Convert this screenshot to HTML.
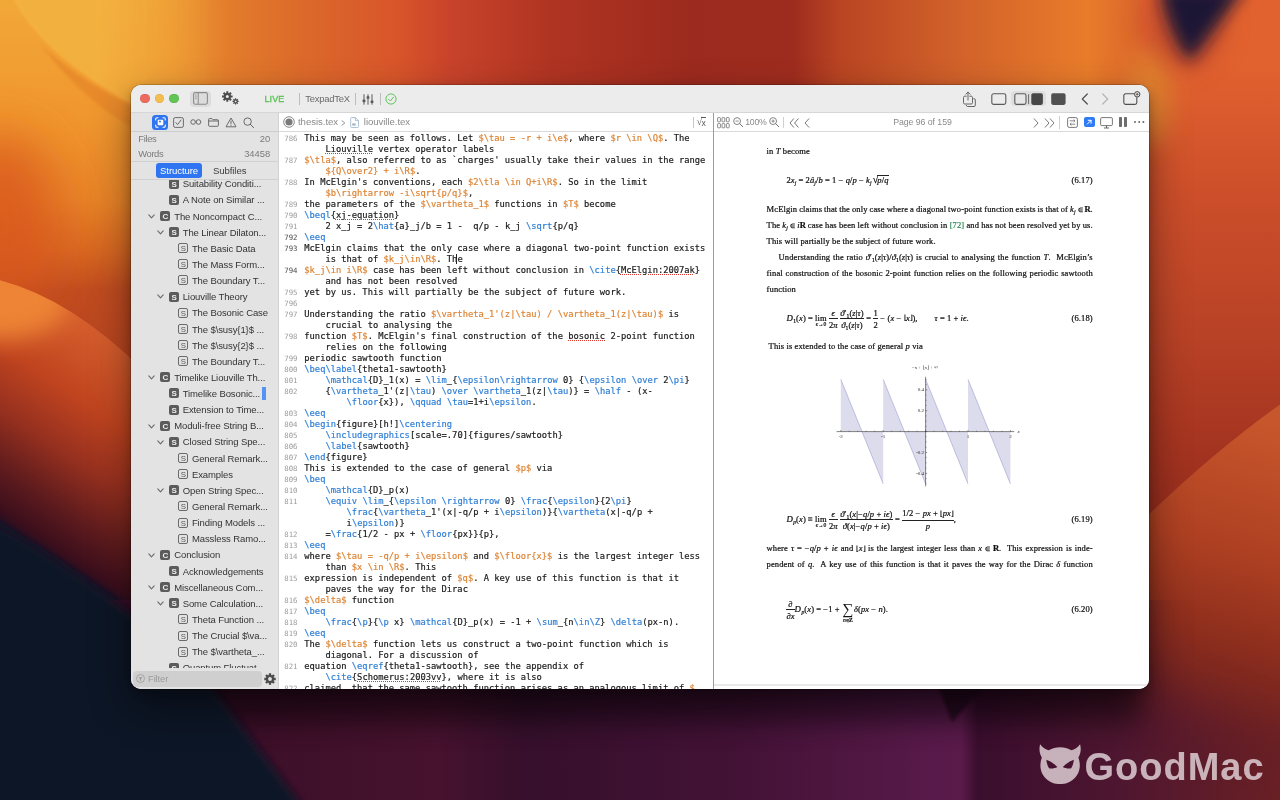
<!DOCTYPE html>
<html lang="en"><head><meta charset="utf-8"><title>Texpad – liouville.tex</title>
<style>
*{box-sizing:border-box;margin:0;padding:0}
html,body{width:1280px;height:800px;overflow:hidden;background:#c4431f}
body{position:relative;font-family:"Liberation Sans",sans-serif;-webkit-font-smoothing:antialiased}
.bg{position:absolute;left:0;top:0}
#win{will-change:transform;position:absolute;left:131px;top:85px;width:1018px;height:604px;border-radius:10px;overflow:hidden;background:#fff;box-shadow:0 0 0 0.5px rgba(0,0,0,.35),0 18px 40px rgba(0,0,0,.45),0 4px 12px rgba(0,0,0,.25)}
#win>div,#win>svg{position:absolute}
#tb{left:0;top:0;width:1018px;height:27.5px;background:#ececec;border-bottom:0.5px solid #d6d6d6}
#side{left:0;top:27.5px;width:147.5px;height:576.5px;background:#e3e3e3;border-right:1px solid #d2d2d2}
#ed{left:148px;top:27.5px;width:434.5px;height:576.5px;background:#fff;overflow:hidden}
#pdf{left:582px;top:27.5px;width:436px;height:576.5px;background:#fff;border-left:1px solid #9c9c9c}
.hl{position:absolute;height:1px;background:#d4d4d4}
.vl{position:absolute;width:1px;background:#c9c9c9}
.t{position:absolute;white-space:nowrap;line-height:14px;height:14px}
/* code */
.cl,.ln{position:absolute;white-space:pre;font-family:"DejaVu Sans Mono","Liberation Mono",monospace;line-height:11px;height:11px}
.cl{font-size:8.78px;color:#1a1a1a;-webkit-text-stroke:0.18px}
.ln{left:148px;width:18.3px;text-align:right;font-size:7.35px;color:#9a9a9a;padding-top:0.1px;letter-spacing:-0.1px}
.ln.cur{color:#4a4a4a}
.o{color:#dd8333}.b{color:#2f7fd6}
.sq{text-decoration:underline dotted #e0352b;text-decoration-thickness:1px;text-underline-offset:1px}
/* tree */
.ti{position:absolute;width:10px;height:10px;border-radius:2px;font-size:8px;line-height:11.6px;text-align:center;font-weight:bold;overflow:hidden}
.ti.f{background:#5b5b5b;color:#efefef}
.ti.o{border:1px solid #6a6a6a;color:#555;line-height:9.4px;font-weight:normal;font-size:7.8px}
.tl{position:absolute;white-space:nowrap;font-size:9.5px;line-height:14px;height:14px;color:#333;letter-spacing:-0.1px}
.chev{position:absolute}
/* pdf */
.pl,.eq{position:absolute;font-family:"Liberation Serif",serif;font-size:8.5px;letter-spacing:0.12px;line-height:16px;height:16px;white-space:nowrap;color:#111;-webkit-text-stroke:0.22px}
.pl.j{white-space:normal;text-align:justify;text-align-last:justify;overflow:hidden}
.pl sub,.eq sub{font-size:5.6px;vertical-align:-1.6px;line-height:0}
.g{color:#2e8a57}
.bb{font-weight:bold;letter-spacing:-0.2px}
.eq{white-space:nowrap;overflow:visible;word-spacing:-0.1px}
.fl{font-size:7.4px;letter-spacing:-0.5px;position:relative;top:-0.3px}
.eq i,.pl i{font-style:italic}
.fr{display:inline-block;vertical-align:middle;text-align:center;margin:-5px 0;position:relative;top:0.3px}
.fr .nu{display:block;line-height:10px;border-bottom:0.55px solid #222;padding:0 0.3px 0.6px}
.fr .de{display:block;line-height:10px;padding-top:0.6px}
.lim{display:inline-block;position:relative;margin:0;text-align:center}
.lim .ls{position:absolute;left:50%;transform:translateX(-50%);top:11.4px;font-size:5.6px;line-height:6px;letter-spacing:0;white-space:nowrap}
.sum{font-size:15.5px;line-height:16px;position:relative;top:0.8px;display:inline-block;height:16px;vertical-align:top;letter-spacing:0;margin:0 0.5px;-webkit-text-stroke:0}
.su .ls{top:16.2px}
.sqr{font-size:10px;margin-left:1px;position:relative;top:0.6px;letter-spacing:0;line-height:0}
.ov{border-top:0.55px solid #222;display:inline-block;line-height:9.4px;margin-left:-0.9px;position:relative;top:0.6px}
.in{font-size:6.4px;letter-spacing:0;position:relative;top:-0.4px}
.sp{display:inline-block}
.cd{font-size:8.8px;margin-right:0.3px}
.pt{font-family:"Liberation Serif",serif;font-size:5px;fill:#2a2a2a}
</style></head><body>

<svg class="bg" width="1280" height="800" viewBox="0 0 1280 800">
<defs>
<filter id="b40" x="-50%" y="-50%" width="200%" height="200%"><feGaussianBlur stdDeviation="40"/></filter>
<filter id="b25" x="-50%" y="-50%" width="200%" height="200%"><feGaussianBlur stdDeviation="25"/></filter>
<filter id="b12" x="-50%" y="-50%" width="200%" height="200%"><feGaussianBlur stdDeviation="12"/></filter>
<filter id="b9" x="-50%" y="-50%" width="200%" height="200%"><feGaussianBlur stdDeviation="8"/></filter>
<filter id="b6" x="-50%" y="-50%" width="200%" height="200%"><feGaussianBlur stdDeviation="6"/></filter>
<filter id="b4" x="-50%" y="-50%" width="200%" height="200%"><feGaussianBlur stdDeviation="4"/></filter>
<filter id="b2" x="-50%" y="-50%" width="200%" height="200%"><feGaussianBlur stdDeviation="1.5"/></filter>
<linearGradient id="top" gradientUnits="userSpaceOnUse" x1="0" y1="0" x2="1280" y2="0">
<stop offset="0" stop-color="#f2aa3a"/><stop offset="0.078" stop-color="#f2a83a"/><stop offset="0.117" stop-color="#ee9a34"/><stop offset="0.18" stop-color="#e27c2c"/><stop offset="0.234" stop-color="#dc6a2a"/><stop offset="0.31" stop-color="#d8552a"/><stop offset="0.352" stop-color="#c8432a"/><stop offset="0.43" stop-color="#b03422"/><stop offset="0.54" stop-color="#9c2a1e"/><stop offset="0.62" stop-color="#9e2c1e"/><stop offset="0.655" stop-color="#b84422"/><stop offset="0.742" stop-color="#d0602a"/><stop offset="0.85" stop-color="#e87c2a"/><stop offset="0.9" stop-color="#d8602c"/><stop offset="1" stop-color="#e0623a"/>
</linearGradient>
<linearGradient id="lft" gradientUnits="userSpaceOnUse" x1="0" y1="0" x2="0" y2="400">
<stop offset="0" stop-color="#f2a838"/><stop offset="0.3" stop-color="#f0962e"/><stop offset="0.5" stop-color="#e88428"/><stop offset="0.625" stop-color="#d86822"/><stop offset="0.725" stop-color="#c04c20"/><stop offset="0.9" stop-color="#b84420"/>
</linearGradient>
<linearGradient id="lf2" gradientUnits="userSpaceOnUse" x1="90" y1="330" x2="-27.5" y2="505">
<stop offset="0" stop-color="#d45c2c"/><stop offset="0.3" stop-color="#c0441f"/><stop offset="0.55" stop-color="#96301f"/><stop offset="0.78" stop-color="#5e1b1d"/><stop offset="0.95" stop-color="#3a0e1c"/><stop offset="1" stop-color="#1e1226"/>
</linearGradient>
<linearGradient id="rgt" gradientUnits="userSpaceOnUse" x1="0" y1="60" x2="0" y2="520">
<stop offset="0" stop-color="#e2622f"/><stop offset="0.3" stop-color="#cc4e2a"/><stop offset="0.6" stop-color="#b84226"/><stop offset="0.8" stop-color="#a83621"/><stop offset="1" stop-color="#962c1d"/>
</linearGradient>
<linearGradient id="rg2" gradientUnits="userSpaceOnUse" x1="1260" y1="420" x2="1160" y2="770">
<stop offset="0" stop-color="#c8562c"/><stop offset="0.36" stop-color="#ae4022"/><stop offset="0.6" stop-color="#8e2e1d"/><stop offset="0.8" stop-color="#702222"/><stop offset="1" stop-color="#581a2a"/>
</linearGradient>
<linearGradient id="purp" gradientUnits="userSpaceOnUse" x1="200" y1="0" x2="1280" y2="0">
<stop offset="0" stop-color="#3a0f28"/><stop offset="0.22" stop-color="#46122e"/><stop offset="0.3" stop-color="#36102c"/><stop offset="0.5" stop-color="#431236"/><stop offset="0.68" stop-color="#581a4a"/><stop offset="0.705" stop-color="#5a1a4a"/><stop offset="0.72" stop-color="#3a0e2e"/><stop offset="0.85" stop-color="#4e1630"/><stop offset="1" stop-color="#6a2024"/>
</linearGradient>
<linearGradient id="shade" gradientUnits="userSpaceOnUse" x1="0" y1="689" x2="0" y2="800">
<stop offset="0" stop-color="#000" stop-opacity="0.35"/><stop offset="0.4" stop-color="#000" stop-opacity="0.08"/><stop offset="1" stop-color="#000" stop-opacity="0"/>
</linearGradient>
<linearGradient id="yl" gradientUnits="userSpaceOnUse" x1="0" y1="0" x2="240" y2="0">
<stop offset="0" stop-color="#f3b341"/><stop offset="0.4" stop-color="#f3b341"/><stop offset="0.95" stop-color="#f0a038" stop-opacity="0"/>
</linearGradient>
<radialGradient id="rr" gradientUnits="userSpaceOnUse" cx="1310" cy="560" r="330">
<stop offset="0" stop-color="#a03a1e"/><stop offset="0.28" stop-color="#8e2e1c"/><stop offset="0.42" stop-color="#7a281e" stop-opacity="0.95"/><stop offset="0.62" stop-color="#66202a" stop-opacity="0.75"/><stop offset="1" stop-color="#4a1434" stop-opacity="0"/>
</radialGradient>
<mask id="pm" maskUnits="userSpaceOnUse" x="0" y="560" width="1280" height="240"><rect x="0" y="560" width="1280" height="240" fill="#fff"/><path d="M1135,500 L1400,500 L1400,800 L1135,688 Z" fill="#000" filter="url(#b25)"/></mask>
<linearGradient id="lmg" gradientUnits="userSpaceOnUse" x1="90" y1="0" x2="215" y2="0"><stop offset="0" stop-color="#fff"/><stop offset="1" stop-color="#000"/></linearGradient><mask id="lm" maskUnits="userSpaceOnUse" x="0" y="-5" width="220" height="90"><rect x="0" y="-5" width="220" height="90" fill="url(#lmg)"/></mask>
<clipPath id="cB"><path d="M-5,279 Q70,297 145,372 L145,640 L-5,640 Z"/></clipPath>
</defs>
<rect width="1280" height="800" fill="#b8401f"/>
<!-- top strip -->
<rect x="0" y="0" width="1280" height="120" fill="url(#top)"/>
<!-- left strip -->
<rect x="0" y="84" width="200" height="336" fill="url(#lft)"/><rect x="0" y="-5" width="220" height="90" fill="url(#lft)" mask="url(#lm)"/>
<path d="M14,-2 Q48,62 150,112 L240,112 L240,-2 Z" fill="url(#yl)" filter="url(#b2)" opacity="0.85"/>
<rect x="100" y="0" width="200" height="120" fill="url(#top)" opacity="0.0"/>
<ellipse cx="0" cy="225" rx="58" ry="90" fill="#d9561d" filter="url(#b25)" opacity="0.8"/>
<path d="M40,44 Q84,86 150,113 L150,136 Q92,112 40,44 Z" fill="#e27e26" opacity="0.55" filter="url(#b2)"/>
<path d="M14,-2 Q48,62 150,112" fill="none" stroke="#f9c452" stroke-width="1.2" opacity="0.55" filter="url(#b2)"/>
<path d="M-5,279 Q70,297 145,372 L145,640 L-5,640 Z" fill="url(#lf2)"/>
<g clip-path="url(#cB)"><ellipse cx="0" cy="300" rx="70" ry="40" fill="#ee8434" filter="url(#b12)"/></g>
<!-- right strip -->
<rect x="1140" y="-5" width="150" height="555" fill="url(#rgt)"/>
<ellipse cx="1150" cy="95" rx="22" ry="50" fill="#e0802e" filter="url(#b12)"/>
<path d="M1140,523 Q1215,450 1285,401 L1285,810 L1100,810 L1100,600 Z" fill="url(#rg2)"/>
<!-- dark wedge top right -->
<ellipse cx="1185" cy="20" rx="40" ry="50" fill="#b8442a" filter="url(#b12)" opacity="0.7"/><path d="M1160,-14 L1246,-14 L1190,62 Q1168,36 1160,-14 Z" fill="#1c1736" filter="url(#b9)"/>
<!-- bottom strip -->
<rect x="0" y="600" width="1280" height="200" fill="url(#purp)" mask="url(#pm)"/>
<path d="M985,686 L952,722 L938,686 Z" fill="#2e0a26" filter="url(#b2)"/>

<rect x="140" y="660" width="1000" height="62" fill="#000" opacity="0.33" filter="url(#b12)"/>
<!-- navy -->
<path d="M-20,514 Q70,566 131,614 L215,691 L305,810 L-20,810 Z" fill="#0b1728" filter="url(#b4)"/>
</svg>

<div id="wm" style="position:absolute;left:1038px;top:742px;width:240px;height:48px;opacity:.84">
<svg width="46" height="46" viewBox="0 0 46 46" style="position:absolute;left:0;top:0">
<path fill-rule="evenodd" fill="#e0d0d6" d="M2.1 2.2 C4.6 5.6 7.6 7.4 10.8 8.2 C14.2 6.2 18 5.2 22.1 5.2 C26.2 5.2 30 6.2 33.4 8.2 C36.6 7.4 39.6 5.6 42.1 2.2 C43.4 7.4 42.6 11.8 40.4 15.4 C41.3 17.9 41.8 20.6 41.8 23.4 C41.8 34 33 42.1 22.1 42.1 C11.2 42.1 2.4 34 2.4 23.4 C2.4 20.6 2.9 17.9 3.8 15.4 C1.6 11.8 0.8 7.4 2.1 2.2 Z M8.4 17.8 C12.6 19.4 16.4 21.8 19.4 25 C16.8 26.4 13.6 26.8 11 26.2 C9.4 23.6 8.6 20.8 8.4 17.8 Z M35.8 17.8 C31.6 19.4 27.8 21.8 24.8 25 C27.4 26.4 30.6 26.8 33.2 26.2 C34.8 23.6 35.6 20.8 35.8 17.8 Z"/>
</svg>
<div style="position:absolute;left:46.5px;top:1.9px;font-family:'Liberation Sans',sans-serif;font-weight:bold;font-size:38px;line-height:46px;color:#e0d0d6;letter-spacing:1px;white-space:nowrap">GoodMac</div>
</div>

<div id="win">
<div id="tb">
  <div style="position:absolute;left:9.4px;top:9.2px;width:9.2px;height:9.2px;border-radius:50%;background:#ec6a5e;box-shadow:inset 0 0 0 0.5px rgba(0,0,0,.12)"></div>
  <div style="position:absolute;left:23.9px;top:9.2px;width:9.2px;height:9.2px;border-radius:50%;background:#f4be4f;box-shadow:inset 0 0 0 0.5px rgba(0,0,0,.12)"></div>
  <div style="position:absolute;left:38.4px;top:9.2px;width:9.2px;height:9.2px;border-radius:50%;background:#61c454;box-shadow:inset 0 0 0 0.5px rgba(0,0,0,.12)"></div>
  <!-- sidebar toggle -->
  <div style="position:absolute;left:59px;top:5.5px;width:20.5px;height:16px;border-radius:4px;background:#dcdcdc"></div>
  <svg style="position:absolute;left:62px;top:7px" width="15" height="13" viewBox="0 0 15 13"><rect x="0.6" y="0.6" width="13.8" height="11.6" rx="1.6" fill="none" stroke="#8c8c8c" stroke-width="1.1"/><line x1="5.2" y1="0.6" x2="5.2" y2="12.2" stroke="#8c8c8c" stroke-width="1"/><line x1="2" y1="3" x2="3.7" y2="3" stroke="#8c8c8c" stroke-width="0.7"/><line x1="2" y1="4.8" x2="3.7" y2="4.8" stroke="#8c8c8c" stroke-width="0.7"/><line x1="2" y1="6.6" x2="3.7" y2="6.6" stroke="#8c8c8c" stroke-width="0.7"/></svg>
  <!-- gears -->
  <svg style="position:absolute;left:90px;top:5px" width="20" height="16" viewBox="0 0 20 16">
   <g fill="#4d4d4d"><circle cx="6.3" cy="6.5" r="3.6"/><g stroke="#4d4d4d" stroke-width="2" stroke-linecap="butt"><line x1="6.3" y1="1.2" x2="6.3" y2="11.8"/><line x1="1" y1="6.5" x2="11.6" y2="6.5"/><line x1="2.55" y1="2.75" x2="10.05" y2="10.25"/><line x1="10.05" y1="2.75" x2="2.55" y2="10.25"/></g><circle cx="6.3" cy="6.5" r="1.5" fill="#ececec"/>
   <circle cx="14.6" cy="11.4" r="2.1"/><g stroke="#4d4d4d" stroke-width="1.3"><line x1="14.6" y1="8.3" x2="14.6" y2="14.5"/><line x1="11.5" y1="11.4" x2="17.7" y2="11.4"/><line x1="12.4" y1="9.2" x2="16.8" y2="13.6"/><line x1="16.8" y1="9.2" x2="12.4" y2="13.6"/></g><circle cx="14.6" cy="11.4" r="0.9" fill="#ececec"/></g></svg>
  <div class="t" style="left:133.5px;top:6.8px;font-size:9px;color:#5cc458;letter-spacing:0.1px;-webkit-text-stroke:0.35px #5cc458">LIVE</div>
  <div class="vl" style="left:168px;top:8px;height:11.5px;background:#bdbdbd"></div>
  <div class="t" style="left:174.3px;top:6.8px;font-size:9.4px;color:#6a6a6a;letter-spacing:-0.2px">TexpadTeX</div>
  <div class="vl" style="left:224.3px;top:8px;height:11.5px;background:#bdbdbd"></div>
  <svg style="position:absolute;left:231px;top:8.5px" width="12" height="11" viewBox="0 0 12 11"><g stroke="#5a5a5a" stroke-width="1" fill="none"><line x1="2" y1="0.3" x2="2" y2="10.7"/><line x1="6" y1="0.3" x2="6" y2="10.7"/><line x1="10" y1="0.3" x2="10" y2="10.7"/></g><g fill="#5a5a5a"><rect x="0.6" y="5.6" width="2.8" height="2.6" rx="0.6"/><rect x="4.6" y="2.2" width="2.8" height="2.6" rx="0.6"/><rect x="8.6" y="6.4" width="2.8" height="2.6" rx="0.6"/></g></svg>
  <div class="vl" style="left:249.3px;top:8px;height:11.5px;background:#bdbdbd"></div>
  <svg style="position:absolute;left:254.2px;top:7.7px" width="12" height="12" viewBox="0 0 12 12"><circle cx="6" cy="6" r="5.1" fill="none" stroke="#5fc55b" stroke-width="1"/><path d="M3.6 6.3 L5.3 8 L8.5 4.1" fill="none" stroke="#5fc55b" stroke-width="1" stroke-linecap="round" stroke-linejoin="round"/></svg>
  <!-- right icons -->
  <svg style="position:absolute;left:831px;top:5.5px" width="15" height="17" viewBox="0 0 15 17"><g fill="none" stroke="#666" stroke-width="1" stroke-linejoin="round" stroke-linecap="round"><path d="M4.3 5.2 H2.8 a1.3 1.3 0 0 0 -1.3 1.3 V11.7 a1.3 1.3 0 0 0 1.3 1.3 H9.2 a1.3 1.3 0 0 0 1.3 -1.3 V6.5 a1.3 1.3 0 0 0 -1.3 -1.3 H7.7"/><path d="M6 9 V1.2 M3.9 3.2 L6 1.1 L8.1 3.2"/><path d="M11.8 7.6 a1.3 1.3 0 0 1 1.5 1.3 V14.2 a1.3 1.3 0 0 1 -1.3 1.3 H5.6 a1.3 1.3 0 0 1 -1.3 -1.2"/></g></svg>
  <svg style="position:absolute;left:859.5px;top:7.5px" width="16" height="12.4" viewBox="0 0 16 12.4"><rect x="0.8" y="0.8" width="14" height="10.6" rx="1.8" fill="none" stroke="#5a5a5a" stroke-width="1.1"/></svg>
  <div style="position:absolute;left:879.8px;top:5.7px;width:35px;height:15.5px;border-radius:4px;background:#dedede"></div>
  <svg style="position:absolute;left:882.5px;top:7.5px" width="30" height="12.4" viewBox="0 0 30 12.4"><rect x="0.8" y="0.8" width="11.2" height="10.6" rx="1.8" fill="#e6e6e6" stroke="#5a5a5a" stroke-width="1.1"/><rect x="14.1" y="1.2" width="1" height="10" fill="#6a6a6a"/><rect x="17.3" y="0.3" width="11.6" height="11.6" rx="1.8" fill="#474747"/></svg>
  <svg style="position:absolute;left:919.7px;top:7.5px" width="15" height="12.4" viewBox="0 0 15 12.4"><rect x="0.2" y="0.3" width="14.4" height="11.6" rx="1.8" fill="#505050"/></svg>
  <svg style="position:absolute;left:949.5px;top:7.5px" width="8" height="12" viewBox="0 0 8 12"><path d="M6.3 1 L1.3 6 L6.3 11" fill="none" stroke="#505050" stroke-width="1.2" stroke-linecap="round" stroke-linejoin="round"/></svg>
  <svg style="position:absolute;left:969.5px;top:7.5px" width="8" height="12" viewBox="0 0 8 12"><path d="M1.7 1 L6.7 6 L1.7 11" fill="none" stroke="#b4b4b4" stroke-width="1.2" stroke-linecap="round" stroke-linejoin="round"/></svg>
  <svg style="position:absolute;left:992px;top:5.5px" width="18" height="15" viewBox="0 0 18 15"><path d="M11.3 2.8 H2.6 a1.8 1.8 0 0 0 -1.8 1.8 V11.6 a1.8 1.8 0 0 0 1.8 1.8 H12 a1.8 1.8 0 0 0 1.8 -1.8 V6.3" fill="none" stroke="#505050" stroke-width="1.1"/><circle cx="14.2" cy="3.3" r="2.7" fill="#ececec" stroke="#444" stroke-width="1"/><path d="M14.2 1.9 V4.7 M12.8 3.3 H15.6" stroke="#444" stroke-width="0.8"/></svg>
</div>

<div id="side">
  <div style="position:absolute;left:21.3px;top:2px;width:16.2px;height:15px;border-radius:3.5px;background:#2f74f0"></div>
  <svg style="position:absolute;left:23.9px;top:4px" width="11" height="11" viewBox="0 0 11 11"><g fill="none" stroke="#fff" stroke-width="1.1" stroke-linecap="round"><path d="M0.7 3 V2 a1.3 1.3 0 0 1 1.3 -1.3 H3"/><path d="M8 0.7 H9 a1.3 1.3 0 0 1 1.3 1.3 V3"/><path d="M10.3 8 V9 a1.3 1.3 0 0 1 -1.3 1.3 H8"/><path d="M3 10.3 H2 a1.3 1.3 0 0 1 -1.3 -1.3 V8"/></g><rect x="2.7" y="2.7" width="5.6" height="5.6" rx="1" fill="#fff"/><rect x="3.9" y="3.7" width="2" height="1.6" fill="#2f74f0"/></svg>
  <svg style="position:absolute;left:41.7px;top:4.3px" width="11" height="11" viewBox="0 0 11 11"><rect x="0.6" y="0.6" width="9.8" height="9.8" rx="1.6" fill="none" stroke="#5f5f5f" stroke-width="0.9"/><path d="M2.9 5.6 L4.6 7.6 L8 3" fill="none" stroke="#5f5f5f" stroke-width="0.9" stroke-linecap="round" stroke-linejoin="round"/></svg>
  <svg style="position:absolute;left:59px;top:6.5px" width="12" height="6" viewBox="0 0 12 6"><circle cx="3.1" cy="3" r="2.3" fill="none" stroke="#5f5f5f" stroke-width="0.9"/><circle cx="8.5" cy="3" r="2.3" fill="none" stroke="#5f5f5f" stroke-width="0.9"/></svg>
  <svg style="position:absolute;left:76.7px;top:5.3px" width="11" height="9" viewBox="0 0 11 9"><path d="M0.6 1.5 a0.9 0.9 0 0 1 0.9 -0.9 H4 L5 1.7 H9.5 a0.9 0.9 0 0 1 0.9 0.9 V7.4 a0.9 0.9 0 0 1 -0.9 0.9 H1.5 a0.9 0.9 0 0 1 -0.9 -0.9 Z M0.6 3 H10.4" fill="none" stroke="#5f5f5f" stroke-width="0.9" stroke-linejoin="round"/></svg>
  <svg style="position:absolute;left:94.2px;top:4px" width="12" height="11" viewBox="0 0 12 11"><path d="M6 1 L11 9.8 H1 Z" fill="none" stroke="#5f5f5f" stroke-width="0.9" stroke-linejoin="round"/><path d="M6 4 V6.8" stroke="#5f5f5f" stroke-width="0.9" stroke-linecap="round"/><circle cx="6" cy="8.2" r="0.55" fill="#5f5f5f"/></svg>
  <svg style="position:absolute;left:111.8px;top:4px" width="12" height="12" viewBox="0 0 12 12"><circle cx="4.6" cy="4.6" r="3.7" fill="none" stroke="#5f5f5f" stroke-width="0.9"/><path d="M7.4 7.4 L10.6 10.6" stroke="#5f5f5f" stroke-width="1" stroke-linecap="round"/></svg>
  <div class="hl" style="left:0;top:18.7px;width:147px;background:#cdcdcd"></div>
  <div class="t" style="left:7.3px;top:19.7px;font-size:9.4px;color:#7b7b7b;letter-spacing:-0.35px">Files</div>
  <div class="t" style="right:7.3px;top:19.7px;font-size:9.4px;color:#7b7b7b">20</div>
  <div class="t" style="left:7.3px;top:34.2px;font-size:9.4px;color:#7b7b7b;letter-spacing:-0.4px">Words</div>
  <div class="t" style="right:7.3px;top:34.2px;font-size:9.4px;color:#7b7b7b">34458</div>
  <div class="hl" style="left:0;top:48px;width:147px;background:#d0d0d0"></div>
  <div style="position:absolute;left:24.9px;top:50.5px;width:46.4px;height:14.6px;border-radius:3px;background:#2f74f0"></div>
  <div class="t" style="left:24.9px;width:46.4px;text-align:center;top:51.4px;font-size:9.6px;color:#fff;letter-spacing:-0.1px">Structure</div>
  <div class="t" style="left:82px;top:51.4px;font-size:9.6px;color:#3c3c3c;letter-spacing:-0.1px">Subfiles</div>
  <div class="hl" style="left:0;top:66.5px;width:147px;background:#d0d0d0"></div>
</div>
<div id="treeclip" style="left:0;top:94.5px;width:147px;height:488.5px;overflow:hidden"><div style="position:absolute;left:0;top:-94.5px;width:147px;height:604px">
<div class="ti f" style="left:38.2px;top:93.6px">S</div>
<div class="tl" style="left:51.7px;top:92.2px">Suitability Conditi...</div>
<div class="ti f" style="left:38.2px;top:109.7px">S</div>
<div class="tl" style="left:51.7px;top:108.3px">A Note on Similar ...</div>
<svg class="chev" style="left:17.2px;top:128.7px" width="7" height="5" viewBox="0 0 7 5"><path d="M0.8 0.9 L3.5 3.8 L6.2 0.9" fill="none" stroke="#6a6a6a" stroke-width="1.1" stroke-linecap="round" stroke-linejoin="round"/></svg>
<div class="ti f" style="left:29.4px;top:125.9px">C</div>
<div class="tl" style="left:43.2px;top:124.5px">The Noncompact C...</div>
<svg class="chev" style="left:26.0px;top:144.8px" width="7" height="5" viewBox="0 0 7 5"><path d="M0.8 0.9 L3.5 3.8 L6.2 0.9" fill="none" stroke="#6a6a6a" stroke-width="1.1" stroke-linecap="round" stroke-linejoin="round"/></svg>
<div class="ti f" style="left:38.2px;top:142.0px">S</div>
<div class="tl" style="left:51.7px;top:140.6px">The Linear Dilaton...</div>
<div class="ti o" style="left:47.3px;top:158.2px">S</div>
<div class="tl" style="left:60.9px;top:156.8px">The Basic Data</div>
<div class="ti o" style="left:47.3px;top:174.3px">S</div>
<div class="tl" style="left:60.9px;top:172.9px">The Mass Form...</div>
<div class="ti o" style="left:47.3px;top:190.4px">S</div>
<div class="tl" style="left:60.9px;top:189.0px">The Boundary T...</div>
<svg class="chev" style="left:26.0px;top:209.4px" width="7" height="5" viewBox="0 0 7 5"><path d="M0.8 0.9 L3.5 3.8 L6.2 0.9" fill="none" stroke="#6a6a6a" stroke-width="1.1" stroke-linecap="round" stroke-linejoin="round"/></svg>
<div class="ti f" style="left:38.2px;top:206.6px">S</div>
<div class="tl" style="left:51.7px;top:205.2px">Liouville Theory</div>
<div class="ti o" style="left:47.3px;top:222.7px">S</div>
<div class="tl" style="left:60.9px;top:221.3px">The Bosonic Case</div>
<div class="ti o" style="left:47.3px;top:238.9px">S</div>
<div class="tl" style="left:60.9px;top:237.5px">The $\susy{1}$ ...</div>
<div class="ti o" style="left:47.3px;top:255.0px">S</div>
<div class="tl" style="left:60.9px;top:253.6px">The $\susy{2}$ ...</div>
<div class="ti o" style="left:47.3px;top:271.1px">S</div>
<div class="tl" style="left:60.9px;top:269.7px">The Boundary T...</div>
<svg class="chev" style="left:17.2px;top:290.1px" width="7" height="5" viewBox="0 0 7 5"><path d="M0.8 0.9 L3.5 3.8 L6.2 0.9" fill="none" stroke="#6a6a6a" stroke-width="1.1" stroke-linecap="round" stroke-linejoin="round"/></svg>
<div class="ti f" style="left:29.4px;top:287.3px">C</div>
<div class="tl" style="left:43.2px;top:285.9px">Timelike Liouville Th...</div>
<div class="ti f" style="left:38.2px;top:303.4px">S</div>
<div class="tl" style="left:51.7px;top:302.0px">Timelike Bosonic...</div>
<div style="position:absolute;left:131.2px;top:301.9px;width:3.8px;height:13px;background:#5593f6"></div>
<div class="ti f" style="left:38.2px;top:319.6px">S</div>
<div class="tl" style="left:51.7px;top:318.2px">Extension to Time...</div>
<svg class="chev" style="left:17.2px;top:338.5px" width="7" height="5" viewBox="0 0 7 5"><path d="M0.8 0.9 L3.5 3.8 L6.2 0.9" fill="none" stroke="#6a6a6a" stroke-width="1.1" stroke-linecap="round" stroke-linejoin="round"/></svg>
<div class="ti f" style="left:29.4px;top:335.7px">C</div>
<div class="tl" style="left:43.2px;top:334.3px">Moduli-free String B...</div>
<svg class="chev" style="left:26.0px;top:354.6px" width="7" height="5" viewBox="0 0 7 5"><path d="M0.8 0.9 L3.5 3.8 L6.2 0.9" fill="none" stroke="#6a6a6a" stroke-width="1.1" stroke-linecap="round" stroke-linejoin="round"/></svg>
<div class="ti f" style="left:38.2px;top:351.8px">S</div>
<div class="tl" style="left:51.7px;top:350.4px">Closed String Spe...</div>
<div class="ti o" style="left:47.3px;top:368.0px">S</div>
<div class="tl" style="left:60.9px;top:366.6px">General Remark...</div>
<div class="ti o" style="left:47.3px;top:384.1px">S</div>
<div class="tl" style="left:60.9px;top:382.7px">Examples</div>
<svg class="chev" style="left:26.0px;top:403.1px" width="7" height="5" viewBox="0 0 7 5"><path d="M0.8 0.9 L3.5 3.8 L6.2 0.9" fill="none" stroke="#6a6a6a" stroke-width="1.1" stroke-linecap="round" stroke-linejoin="round"/></svg>
<div class="ti f" style="left:38.2px;top:400.3px">S</div>
<div class="tl" style="left:51.7px;top:398.9px">Open String Spec...</div>
<div class="ti o" style="left:47.3px;top:416.4px">S</div>
<div class="tl" style="left:60.9px;top:415.0px">General Remark...</div>
<div class="ti o" style="left:47.3px;top:432.5px">S</div>
<div class="tl" style="left:60.9px;top:431.1px">Finding Models ...</div>
<div class="ti o" style="left:47.3px;top:448.7px">S</div>
<div class="tl" style="left:60.9px;top:447.3px">Massless Ramo...</div>
<svg class="chev" style="left:17.2px;top:467.6px" width="7" height="5" viewBox="0 0 7 5"><path d="M0.8 0.9 L3.5 3.8 L6.2 0.9" fill="none" stroke="#6a6a6a" stroke-width="1.1" stroke-linecap="round" stroke-linejoin="round"/></svg>
<div class="ti f" style="left:29.4px;top:464.8px">C</div>
<div class="tl" style="left:43.2px;top:463.4px">Conclusion</div>
<div class="ti f" style="left:38.2px;top:481.0px">S</div>
<div class="tl" style="left:51.7px;top:479.6px">Acknowledgements</div>
<svg class="chev" style="left:17.2px;top:499.9px" width="7" height="5" viewBox="0 0 7 5"><path d="M0.8 0.9 L3.5 3.8 L6.2 0.9" fill="none" stroke="#6a6a6a" stroke-width="1.1" stroke-linecap="round" stroke-linejoin="round"/></svg>
<div class="ti f" style="left:29.4px;top:497.1px">C</div>
<div class="tl" style="left:43.2px;top:495.7px">Miscellaneous Com...</div>
<svg class="chev" style="left:26.0px;top:516.0px" width="7" height="5" viewBox="0 0 7 5"><path d="M0.8 0.9 L3.5 3.8 L6.2 0.9" fill="none" stroke="#6a6a6a" stroke-width="1.1" stroke-linecap="round" stroke-linejoin="round"/></svg>
<div class="ti f" style="left:38.2px;top:513.2px">S</div>
<div class="tl" style="left:51.7px;top:511.8px">Some Calculation...</div>
<div class="ti o" style="left:47.3px;top:529.4px">S</div>
<div class="tl" style="left:60.9px;top:528.0px">Theta Function ...</div>
<div class="ti o" style="left:47.3px;top:545.5px">S</div>
<div class="tl" style="left:60.9px;top:544.1px">The Crucial $\va...</div>
<div class="ti o" style="left:47.3px;top:561.7px">S</div>
<div class="tl" style="left:60.9px;top:560.3px">The $\vartheta_...</div>
<div class="ti f" style="left:38.2px;top:577.8px">S</div>
<div class="tl" style="left:51.7px;top:576.4px">Quantum Fluctuat...</div>
</div></div>
<div id="filter" style="left:0;top:584px;width:147px;height:20px">
  <div style="position:absolute;left:2px;top:1.6px;width:129px;height:16.4px;border-radius:4px;background:#cfcfcf"></div>
  <svg style="position:absolute;left:5px;top:5.3px" width="9" height="9" viewBox="0 0 9 9"><circle cx="4.5" cy="4.5" r="4" fill="none" stroke="#9a9a9a" stroke-width="0.8"/><path d="M2.3 3.2 H6.7 L5 5 V6.8 H4 V5 Z" fill="#9a9a9a"/></svg>
  <div class="t" style="left:17px;top:2.8px;font-size:9.4px;color:#9c9c9c;letter-spacing:-0.1px">Filter</div>
  <svg style="position:absolute;left:132.5px;top:3.8px" width="12" height="12" viewBox="0 0 12 12"><g stroke="#4a4a4a" stroke-width="2.3"><line x1="6" y1="0.3" x2="6" y2="11.7"/><line x1="0.3" y1="6" x2="11.7" y2="6"/><line x1="1.97" y1="1.97" x2="10.03" y2="10.03"/><line x1="10.03" y1="1.97" x2="1.97" y2="10.03"/></g><circle cx="6" cy="6" r="4.1" fill="#4a4a4a"/><circle cx="6" cy="6" r="1.9" fill="#e3e3e3"/></svg>
</div>

<div id="ed">
  <!-- breadcrumb -->
  <svg style="position:absolute;left:4.2px;top:3.6px" width="12" height="12" viewBox="0 0 12 12"><circle cx="6" cy="6" r="5.3" fill="none" stroke="#7a7a7a" stroke-width="0.9"/><circle cx="6" cy="6" r="3.6" fill="#7a7a7a"/></svg>
  <div class="t" style="left:19px;top:2.4px;font-size:9.6px;color:#8a8a8a;letter-spacing:-0.05px">thesis.tex</div>
  <svg style="position:absolute;left:61.5px;top:7px" width="5" height="6" viewBox="0 0 5 6"><path d="M1 0.8 L3.8 3 L1 5.2" fill="none" stroke="#8a8a8a" stroke-width="0.9" stroke-linecap="round" stroke-linejoin="round"/></svg>
  <svg style="position:absolute;left:71.3px;top:4px" width="9" height="11" viewBox="0 0 9 11"><path d="M1.6 0.5 H5.4 L8.5 3.6 V9.6 a0.9 0.9 0 0 1 -0.9 0.9 H1.6 a0.9 0.9 0 0 1 -0.9 -0.9 V1.4 a0.9 0.9 0 0 1 0.9 -0.9 Z M5.4 0.5 V3.6 H8.5" fill="none" stroke="#9db4cc" stroke-width="0.8" stroke-linejoin="round"/><rect x="2.2" y="6.4" width="3.4" height="2.2" fill="#9db4cc"/></svg>
  <div class="t" style="left:84.8px;top:2.4px;font-size:9.6px;color:#8a8a8a;letter-spacing:-0.05px">liouville.tex</div>
  <div class="vl" style="left:414px;top:4px;height:11.5px;background:#c8c8c8"></div>
  <div class="t" style="left:417.5px;top:2.8px;font-size:10.5px;color:#5a5a5a;font-family:'Liberation Serif',serif">√<span style="border-top:0.6px solid #5a5a5a;font-family:'Liberation Sans',sans-serif;font-size:8.6px;margin-left:-0.8px;position:relative;top:0.3px">x</span></div>
  <div class="hl" style="left:0;top:18.7px;width:434.5px;background:#d9d9d9"></div>
</div>
<div id="codeclip" style="left:148px;top:47px;width:434.5px;height:557px;overflow:hidden"><div style="position:absolute;left:-148px;top:-47px;width:1018px;height:604px">
<div class="ln" style="top:48.2px">786</div>
<div class="cl" style="top:48.2px;left:173.30px">This may be seen as follows. Let <span class="o">$\tau = -r + i\e$</span>, where <span class="o">$r \in \Q$</span>. The</div>
<div class="cl" style="top:59.2px;left:194.45px"><span class="sq">Liouville</span> vertex operator labels</div>
<div class="ln" style="top:70.2px">787</div>
<div class="cl" style="top:70.2px;left:173.30px"><span class="o">$\tla$</span>, also referred to as `charges' usually take their values in the range</div>
<div class="cl" style="top:81.2px;left:194.45px"><span class="o">${Q\over2} + i\R$</span>.</div>
<div class="ln" style="top:92.2px">788</div>
<div class="cl" style="top:92.2px;left:173.30px">In McElgin's conventions, each <span class="o">$2\tla \in Q+i\R$</span>. So in the limit</div>
<div class="cl" style="top:103.2px;left:194.45px"><span class="o">$b\rightarrow -i\sqrt{p/q}$</span>,</div>
<div class="ln" style="top:114.2px">789</div>
<div class="cl" style="top:114.2px;left:173.30px">the parameters of the <span class="o">$\vartheta_1$</span> functions in <span class="o">$T$</span> become</div>
<div class="ln" style="top:125.2px">790</div>
<div class="cl" style="top:125.2px;left:173.30px"><span class="b">\beql</span>{<span class="sq">xj-equation</span>}</div>
<div class="ln" style="top:136.2px">791</div>
<div class="cl" style="top:136.2px;left:194.45px">2 x_j = 2<span class="b">\hat</span>{a}_j/b = 1 -  q/p - k_j <span class="b">\sqrt</span>{p/q}</div>
<div class="ln cur" style="top:147.2px">792</div>
<div class="cl" style="top:147.2px;left:173.30px"><span class="b">\eeq</span></div>
<div class="ln cur" style="top:158.2px">793</div>
<div class="cl" style="top:158.2px;left:173.30px">McElgin claims that the only case where a diagonal two-point function exists</div>
<div class="cl" style="top:169.2px;left:194.45px">is that of <span class="o">$k_j\in\R$</span>. The</div>
<div class="ln cur" style="top:180.2px">794</div>
<div class="cl" style="top:180.2px;left:173.30px"><span class="o">$k_j\in i\R$</span> case has been left without conclusion in <span class="b">\cite</span>{<span class="sq">McElgin:2007ak</span>}</div>
<div class="cl" style="top:191.2px;left:194.45px">and has not been resolved</div>
<div class="ln" style="top:202.2px">795</div>
<div class="cl" style="top:202.2px;left:173.30px">yet by us. This will partially be the subject of future work.</div>
<div class="ln" style="top:213.2px">796</div>
<div class="ln" style="top:224.2px">797</div>
<div class="cl" style="top:224.2px;left:173.30px">Understanding the ratio <span class="o">$\vartheta_1'(z|\tau) / \vartheta_1(z|\tau)$</span> is</div>
<div class="cl" style="top:235.2px;left:194.45px">crucial to analysing the</div>
<div class="ln" style="top:246.2px">798</div>
<div class="cl" style="top:246.2px;left:173.30px">function <span class="o">$T$</span>. McElgin's final construction of the <span class="sq">bosonic</span> 2-point function</div>
<div class="cl" style="top:257.2px;left:194.45px">relies on the following</div>
<div class="ln" style="top:268.2px">799</div>
<div class="cl" style="top:268.2px;left:173.30px">periodic sawtooth function</div>
<div class="ln" style="top:279.2px">800</div>
<div class="cl" style="top:279.2px;left:173.30px"><span class="b">\beq</span><span class="b">\label</span>{theta1-sawtooth}</div>
<div class="ln" style="top:290.2px">801</div>
<div class="cl" style="top:290.2px;left:194.45px"><span class="b">\mathcal</span>{D}_1(x) = <span class="b">\lim</span>_{<span class="b">\epsilon</span><span class="b">\rightarrow</span> 0} {<span class="b">\epsilon</span> <span class="b">\over</span> 2<span class="b">\pi</span>}</div>
<div class="ln" style="top:301.2px">802</div>
<div class="cl" style="top:301.2px;left:194.45px">{<span class="b">\vartheta</span>_1'(z|<span class="b">\tau</span>) <span class="b">\over</span> <span class="b">\vartheta</span>_1(z|<span class="b">\tau</span>)} = <span class="b">\half</span> - (x-</div>
<div class="cl" style="top:312.2px;left:215.60px"><span class="b">\floor</span>{x}), <span class="b">\qquad</span> <span class="b">\tau</span>=1+i<span class="b">\epsilon</span>.</div>
<div class="ln" style="top:323.2px">803</div>
<div class="cl" style="top:323.2px;left:173.30px"><span class="b">\eeq</span></div>
<div class="ln" style="top:334.2px">804</div>
<div class="cl" style="top:334.2px;left:173.30px"><span class="b">\begin</span>{figure}[h!]<span class="b">\centering</span></div>
<div class="ln" style="top:345.2px">805</div>
<div class="cl" style="top:345.2px;left:194.45px"><span class="b">\includegraphics</span>[scale=.70]{figures/sawtooth}</div>
<div class="ln" style="top:356.2px">806</div>
<div class="cl" style="top:356.2px;left:194.45px"><span class="b">\label</span>{sawtooth}</div>
<div class="ln" style="top:367.2px">807</div>
<div class="cl" style="top:367.2px;left:173.30px"><span class="b">\end</span>{figure}</div>
<div class="ln" style="top:378.2px">808</div>
<div class="cl" style="top:378.2px;left:173.30px">This is extended to the case of general <span class="o">$p$</span> via</div>
<div class="ln" style="top:389.2px">809</div>
<div class="cl" style="top:389.2px;left:173.30px"><span class="b">\beq</span></div>
<div class="ln" style="top:400.2px">810</div>
<div class="cl" style="top:400.2px;left:194.45px"><span class="b">\mathcal</span>{D}_p(x)</div>
<div class="ln" style="top:411.2px">811</div>
<div class="cl" style="top:411.2px;left:194.45px"><span class="b">\equiv</span> <span class="b">\lim</span>_{<span class="b">\epsilon</span> <span class="b">\rightarrow</span> 0} <span class="b">\frac</span>{<span class="b">\epsilon</span>}{2<span class="b">\pi</span>}</div>
<div class="cl" style="top:422.2px;left:215.60px"><span class="b">\frac</span>{<span class="b">\vartheta</span>_1'(x|-q/p + i<span class="b">\epsilon</span>)}{<span class="b">\vartheta</span>(x|-q/p +</div>
<div class="cl" style="top:433.2px;left:215.60px">i<span class="b">\epsilon</span>)}</div>
<div class="ln" style="top:444.2px">812</div>
<div class="cl" style="top:444.2px;left:194.45px">=<span class="b">\frac</span>{1/2 - px + <span class="b">\floor</span>{px}}{p},</div>
<div class="ln" style="top:455.2px">813</div>
<div class="cl" style="top:455.2px;left:173.30px"><span class="b">\eeq</span></div>
<div class="ln" style="top:466.2px">814</div>
<div class="cl" style="top:466.2px;left:173.30px">where <span class="o">$\tau = -q/p + i\epsilon$</span> and <span class="o">$\floor{x}$</span> is the largest integer less</div>
<div class="cl" style="top:477.2px;left:194.45px">than <span class="o">$x \in \R$</span>. This</div>
<div class="ln" style="top:488.2px">815</div>
<div class="cl" style="top:488.2px;left:173.30px">expression is independent of <span class="o">$q$</span>. A key use of this function is that it</div>
<div class="cl" style="top:499.2px;left:194.45px">paves the way for the Dirac</div>
<div class="ln" style="top:510.2px">816</div>
<div class="cl" style="top:510.2px;left:173.30px"><span class="o">$\delta$</span> function</div>
<div class="ln" style="top:521.2px">817</div>
<div class="cl" style="top:521.2px;left:173.30px"><span class="b">\beq</span></div>
<div class="ln" style="top:532.2px">818</div>
<div class="cl" style="top:532.2px;left:194.45px"><span class="b">\frac</span>{<span class="b">\p</span>}{<span class="b">\p</span> x} <span class="b">\mathcal</span>{D}_p(x) = -1 + <span class="b">\sum</span>_{n<span class="b">\in</span><span class="b">\Z</span>} <span class="b">\delta</span>(px-n).</div>
<div class="ln" style="top:543.2px">819</div>
<div class="cl" style="top:543.2px;left:173.30px"><span class="b">\eeq</span></div>
<div class="ln" style="top:554.2px">820</div>
<div class="cl" style="top:554.2px;left:173.30px">The <span class="o">$\delta$</span> function lets us construct a two-point function which is</div>
<div class="cl" style="top:565.2px;left:194.45px">diagonal. For a discussion of</div>
<div class="ln" style="top:576.2px">821</div>
<div class="cl" style="top:576.2px;left:173.30px">equation <span class="b">\eqref</span>{theta1-sawtooth}, see the appendix of</div>
<div class="cl" style="top:587.2px;left:194.45px"><span class="b">\cite</span>{<span class="sq">Schomerus:2003vv</span>}, where it is also</div>
<div class="ln" style="top:598.2px">822</div>
<div class="cl" style="top:598.2px;left:173.30px">claimed, that the same sawtooth function arises as an analogous limit of <span class="o">$</span></div>
<div style="position:absolute;left:325.2px;top:168.5px;width:1px;height:10.5px;background:#222"></div>
</div></div>

<div id="pdf">
  <svg style="position:absolute;left:3px;top:4px" width="13" height="12" viewBox="0 0 13 12"><g fill="none" stroke="#707070" stroke-width="0.8"><rect x="0.6" y="0.6" width="2.8" height="4.2" rx="0.6"/><rect x="5" y="0.6" width="2.8" height="4.2" rx="0.6"/><rect x="9.4" y="0.6" width="2.8" height="4.2" rx="0.6"/><rect x="0.6" y="6.6" width="2.8" height="4.2" rx="0.6"/><rect x="5" y="6.6" width="2.8" height="4.2" rx="0.6"/><rect x="9.4" y="6.6" width="2.8" height="4.2" rx="0.6"/></g></svg>
  <svg style="position:absolute;left:19.4px;top:4.8px" width="10.5" height="10.5" viewBox="0 0 11 11"><circle cx="4.3" cy="4.3" r="3.6" fill="none" stroke="#707070" stroke-width="0.9"/><path d="M7 7 L10.2 10.2" stroke="#707070" stroke-width="1" stroke-linecap="round"/><path d="M2.6 4.3 H6" stroke="#707070" stroke-width="0.8"/></svg>
  <div class="t" style="left:31.2px;top:2.8px;font-size:8.7px;color:#8a8a8a;letter-spacing:-0.2px">100%</div>
  <svg style="position:absolute;left:54.6px;top:4.8px" width="10.5" height="10.5" viewBox="0 0 11 11"><circle cx="4.3" cy="4.3" r="3.6" fill="none" stroke="#707070" stroke-width="0.9"/><path d="M7 7 L10.2 10.2" stroke="#707070" stroke-width="1" stroke-linecap="round"/><path d="M2.6 4.3 H6 M4.3 2.6 V6" stroke="#707070" stroke-width="0.8"/></svg>
  <div class="vl" style="left:69.4px;top:4px;height:11.5px;background:#d0d0d0"></div>
  <svg style="position:absolute;left:75px;top:5px" width="11" height="10" viewBox="0 0 11 10"><path d="M4.6 0.8 L1 5 L4.6 9.2 M9.2 0.8 L5.6 5 L9.2 9.2" fill="none" stroke="#707070" stroke-width="0.95" stroke-linecap="round" stroke-linejoin="round"/></svg>
  <svg style="position:absolute;left:90.4px;top:5px" width="6" height="10" viewBox="0 0 6 10"><path d="M4.8 0.8 L1 5 L4.8 9.2" fill="none" stroke="#707070" stroke-width="0.95" stroke-linecap="round" stroke-linejoin="round"/></svg>
  <div class="t" style="left:150px;width:117px;text-align:center;top:2.8px;font-size:8.75px;color:#8a8a8a;letter-spacing:-0.05px">Page 96 of 159</div>
  <svg style="position:absolute;left:318.8px;top:5px" width="6" height="10" viewBox="0 0 6 10"><path d="M1.2 0.8 L5 5 L1.2 9.2" fill="none" stroke="#707070" stroke-width="0.95" stroke-linecap="round" stroke-linejoin="round"/></svg>
  <svg style="position:absolute;left:330.2px;top:5px" width="11" height="10" viewBox="0 0 11 10"><path d="M1.2 0.8 L5 5 L1.2 9.2 M6.2 0.8 L10 5 L6.2 9.2" fill="none" stroke="#707070" stroke-width="0.95" stroke-linecap="round" stroke-linejoin="round"/></svg>
  <div class="vl" style="left:345.3px;top:3px;height:13.5px;background:#d0d0d0"></div>
  <svg style="position:absolute;left:352.5px;top:4.3px" width="11" height="11" viewBox="0 0 11 11"><rect x="0.6" y="0.6" width="9.8" height="9.8" rx="1.6" fill="none" stroke="#6a6a6a" stroke-width="0.9"/><path d="M2.6 3.8 H8 M6.6 2.5 L8 3.8 L6.6 5.1 M8.4 7.2 H3 M4.4 5.9 L3 7.2 L4.4 8.5" fill="none" stroke="#6a6a6a" stroke-width="0.75"/></svg>
  <div style="position:absolute;left:370.2px;top:4.4px;width:10.4px;height:10.4px;border-radius:2px;background:#2f7bf5"></div>
  <svg style="position:absolute;left:370.2px;top:4.4px" width="10.4" height="10.4" viewBox="0 0 10.4 10.4"><path d="M3.3 7.1 L7 3.4 M4.2 3.3 H7.1 V6.2" fill="none" stroke="#fff" stroke-width="1" stroke-linecap="round" stroke-linejoin="round"/></svg>
  <svg style="position:absolute;left:385.6px;top:4.2px" width="13" height="12" viewBox="0 0 13 12"><rect x="0.6" y="0.6" width="11.8" height="8" rx="1.2" fill="none" stroke="#6a6a6a" stroke-width="0.9"/><path d="M4 11 H9 M6.5 8.6 V11" stroke="#6a6a6a" stroke-width="1.1"/></svg>
  <div style="position:absolute;left:405.4px;top:4.2px;width:3px;height:10.8px;border-radius:0.8px;background:#6e6e6e"></div>
  <div style="position:absolute;left:410.2px;top:4.2px;width:3px;height:10.8px;border-radius:0.8px;background:#6e6e6e"></div>
  <div style="position:absolute;left:420.3px;top:8.7px;width:2px;height:2px;border-radius:50%;background:#6a6a6a;box-shadow:4.2px 0 0 #6a6a6a,8.4px 0 0 #6a6a6a"></div>
  <div class="hl" style="left:0;top:18.7px;width:435px;background:#d9d9d9"></div>
  <div class="hl" style="left:0;top:571.6px;width:436px;height:1.6px;background:#e9e9e9"></div>
</div>
<div id="pdfc" style="left:0;top:0;width:1018px;height:604px;pointer-events:none">
<div class="pl" style="top:57.6px;left:635.6px;">in <i>T</i> become</div>
<div class="pl" style="top:116.1px;left:635.6px;word-spacing:-0.259px">McElgin claims that the only case where a diagonal two-point function exists is that of <i>k</i><sub><i>j</i></sub> <span class="in">∈</span> <span class="bb">R</span>.</div>
<div class="pl" style="top:132.1px;left:635.6px;word-spacing:-0.103px">The <i>k</i><sub><i>j</i></sub> <span class="in">∈</span> <i>i</i><span class="bb">R</span> case has been left without conclusion in <span class="g">[72]</span> and has not been resolved yet by us.</div>
<div class="pl" style="top:148.1px;left:635.6px;">This will partially be the subject of future work.</div>
<div class="pl" style="top:164.0px;left:647.6px;word-spacing:0.593px">Understanding the ratio <i>ϑ</i>′<sub>1</sub>(<i>z</i>|<i>τ</i>)/<i>ϑ</i><sub>1</sub>(<i>z</i>|<i>τ</i>) is crucial to analysing the function <i>T</i>.&nbsp; McElgin’s</div>
<div class="pl" style="top:180.0px;left:635.6px;word-spacing:0.532px">final construction of the bosonic 2-point function relies on the following periodic sawtooth</div>
<div class="pl" style="top:196.0px;left:635.6px;">function</div>
<div class="pl" style="top:253.4px;left:637.6px;">This is extended to the case of general <i>p</i> via</div>
<div class="pl" style="top:455.4px;left:635.6px;word-spacing:0.670px">where <i>τ</i> = −<i>q</i>/<i>p</i> + <i>iϵ</i> and <span class="fl">⌊</span><i>x</i><span class="fl">⌋</span> is the largest integer less than <i>x</i> <span class="in">∈</span> <span class="bb">R</span>.&nbsp; This expression is inde-</div>
<div class="pl" style="top:471.4px;left:635.6px;word-spacing:0.870px">pendent of <i>q</i>.&nbsp; A key use of this function is that it paves the way for the Dirac <i>δ</i> function</div>
<div class="pl" style="top:86.5px;left:635.6px;width:326.2px;text-align:right">(6.17)</div>
<div class="pl" style="top:224.5px;left:635.6px;width:326.2px;text-align:right">(6.18)</div>
<div class="pl" style="top:425.5px;left:635.6px;width:326.2px;text-align:right">(6.19)</div>
<div class="pl" style="top:515.5px;left:635.6px;width:326.2px;text-align:right">(6.20)</div>
<div class="eq" style="top:86.5px;left:655.4px">2<i>x</i><sub><i>j</i></sub> = 2<i>â</i><sub><i>j</i></sub>/<i>b</i> = 1 − <i>q</i>/<i>p</i> − <i>k</i><sub><i>j</i></sub><span class="sqr">√</span><span class="ov"><i>p</i>/<i>q</i></span></div>
<div class="eq" style="top:224.5px;left:655.4px"><i class="cd">D</i><sub>1</sub>(<i>x</i>) = <span class="lim"><span>lim</span><span class="ls"><i>ϵ</i>→0</span></span> <span class="fr"><span class="nu"><i>ϵ</i></span><span class="de">2<i>π</i></span></span> <span class="fr"><span class="nu"><i>ϑ</i>′<sub>1</sub>(<i>z</i>|<i>τ</i>)</span><span class="de"><i>ϑ</i><sub>1</sub>(<i>z</i>|<i>τ</i>)</span></span> = <span class="fr"><span class="nu">1</span><span class="de">2</span></span> − (<i>x</i> − <span class="fl">⌊</span><i>x</i><span class="fl">⌋</span>),<span style="display:inline-block;width:17px"></span><i>τ</i> = 1 + <i>iϵ</i>.</div>
<div class="eq" style="top:425.5px;left:655.4px"><i class="cd">D</i><sub><i>p</i></sub>(<i>x</i>) ≡ <span class="lim"><span>lim</span><span class="ls"><i>ϵ</i>→0</span></span> <span class="fr"><span class="nu"><i>ϵ</i></span><span class="de">2<i>π</i></span></span> <span class="fr"><span class="nu"><i>ϑ</i>′<sub>1</sub>(<i>x</i>|−<i>q</i>/<i>p</i> + <i>iϵ</i>)</span><span class="de"><i>ϑ</i>(<i>x</i>|−<i>q</i>/<i>p</i> + <i>iϵ</i>)</span></span> = <span class="fr"><span class="nu">1/2 − <i>px</i> + <span class="fl">⌊</span><i>px</i><span class="fl">⌋</span></span><span class="de"><i>p</i></span></span>,</div>
<div class="eq" style="top:515.5px;left:655.4px"><span class="fr"><span class="nu"><i>∂</i></span><span class="de"><i>∂x</i></span></span><i class="cd">D</i><sub><i>p</i></sub>(<i>x</i>) = −1 + <span class="lim su"><span class="sum">∑</span><span class="ls"><i>n</i><span style="font-size:4.4px">∈</span><b>Z</b></span></span><i>δ</i>(<i>px</i> − <i>n</i>).</div>
<svg class="plot" width="1018" height="604" viewBox="0 0 1018 604" style="position:absolute;left:0;top:0;overflow:visible">
<polygon points="709.8,294.4 752.2,398.8 752.2,346.6 709.8,346.6" fill="#dddcec"/>
<line x1="709.8" y1="294.4" x2="752.2" y2="398.8" stroke="#9c9cce" stroke-width="0.6"/>
<polygon points="752.2,294.4 794.6,398.8 794.6,346.6 752.2,346.6" fill="#dddcec"/>
<line x1="752.2" y1="294.4" x2="794.6" y2="398.8" stroke="#9c9cce" stroke-width="0.6"/>
<polygon points="794.6,294.4 837.0,398.8 837.0,346.6 794.6,346.6" fill="#dddcec"/>
<line x1="794.6" y1="294.4" x2="837.0" y2="398.8" stroke="#9c9cce" stroke-width="0.6"/>
<polygon points="837.0,294.4 879.4,398.8 879.4,346.6 837.0,346.6" fill="#dddcec"/>
<line x1="837.0" y1="294.4" x2="879.4" y2="398.8" stroke="#9c9cce" stroke-width="0.6"/>
<line x1="705.6" y1="346.6" x2="883.2" y2="346.6" stroke="#333" stroke-width="0.6"/>
<line x1="794.6" y1="291.8" x2="794.6" y2="401.4" stroke="#333" stroke-width="0.6"/>
<line x1="709.8" y1="346.6" x2="709.8" y2="345.0" stroke="#333" stroke-width="0.5"/>
<line x1="718.3" y1="346.6" x2="718.3" y2="345.7" stroke="#333" stroke-width="0.5"/>
<line x1="726.8" y1="346.6" x2="726.8" y2="345.7" stroke="#333" stroke-width="0.5"/>
<line x1="735.2" y1="346.6" x2="735.2" y2="345.7" stroke="#333" stroke-width="0.5"/>
<line x1="743.7" y1="346.6" x2="743.7" y2="345.7" stroke="#333" stroke-width="0.5"/>
<line x1="752.2" y1="346.6" x2="752.2" y2="345.0" stroke="#333" stroke-width="0.5"/>
<line x1="760.7" y1="346.6" x2="760.7" y2="345.7" stroke="#333" stroke-width="0.5"/>
<line x1="769.2" y1="346.6" x2="769.2" y2="345.7" stroke="#333" stroke-width="0.5"/>
<line x1="777.6" y1="346.6" x2="777.6" y2="345.7" stroke="#333" stroke-width="0.5"/>
<line x1="786.1" y1="346.6" x2="786.1" y2="345.7" stroke="#333" stroke-width="0.5"/>
<line x1="794.6" y1="346.6" x2="794.6" y2="345.0" stroke="#333" stroke-width="0.5"/>
<line x1="803.1" y1="346.6" x2="803.1" y2="345.7" stroke="#333" stroke-width="0.5"/>
<line x1="811.6" y1="346.6" x2="811.6" y2="345.7" stroke="#333" stroke-width="0.5"/>
<line x1="820.0" y1="346.6" x2="820.0" y2="345.7" stroke="#333" stroke-width="0.5"/>
<line x1="828.5" y1="346.6" x2="828.5" y2="345.7" stroke="#333" stroke-width="0.5"/>
<line x1="837.0" y1="346.6" x2="837.0" y2="345.0" stroke="#333" stroke-width="0.5"/>
<line x1="845.5" y1="346.6" x2="845.5" y2="345.7" stroke="#333" stroke-width="0.5"/>
<line x1="854.0" y1="346.6" x2="854.0" y2="345.7" stroke="#333" stroke-width="0.5"/>
<line x1="862.4" y1="346.6" x2="862.4" y2="345.7" stroke="#333" stroke-width="0.5"/>
<line x1="870.9" y1="346.6" x2="870.9" y2="345.7" stroke="#333" stroke-width="0.5"/>
<line x1="879.4" y1="346.6" x2="879.4" y2="345.0" stroke="#333" stroke-width="0.5"/>
<line x1="794.6" y1="398.8" x2="795.5" y2="398.8" stroke="#333" stroke-width="0.5"/>
<line x1="794.6" y1="393.6" x2="795.5" y2="393.6" stroke="#333" stroke-width="0.5"/>
<line x1="794.6" y1="388.4" x2="796.2" y2="388.4" stroke="#333" stroke-width="0.5"/>
<line x1="794.6" y1="383.1" x2="795.5" y2="383.1" stroke="#333" stroke-width="0.5"/>
<line x1="794.6" y1="377.9" x2="795.5" y2="377.9" stroke="#333" stroke-width="0.5"/>
<line x1="794.6" y1="372.7" x2="795.5" y2="372.7" stroke="#333" stroke-width="0.5"/>
<line x1="794.6" y1="367.5" x2="796.2" y2="367.5" stroke="#333" stroke-width="0.5"/>
<line x1="794.6" y1="362.3" x2="795.5" y2="362.3" stroke="#333" stroke-width="0.5"/>
<line x1="794.6" y1="357.0" x2="795.5" y2="357.0" stroke="#333" stroke-width="0.5"/>
<line x1="794.6" y1="351.8" x2="795.5" y2="351.8" stroke="#333" stroke-width="0.5"/>
<line x1="794.6" y1="346.6" x2="796.2" y2="346.6" stroke="#333" stroke-width="0.5"/>
<line x1="794.6" y1="341.4" x2="795.5" y2="341.4" stroke="#333" stroke-width="0.5"/>
<line x1="794.6" y1="336.2" x2="795.5" y2="336.2" stroke="#333" stroke-width="0.5"/>
<line x1="794.6" y1="330.9" x2="795.5" y2="330.9" stroke="#333" stroke-width="0.5"/>
<line x1="794.6" y1="325.7" x2="796.2" y2="325.7" stroke="#333" stroke-width="0.5"/>
<line x1="794.6" y1="320.5" x2="795.5" y2="320.5" stroke="#333" stroke-width="0.5"/>
<line x1="794.6" y1="315.3" x2="795.5" y2="315.3" stroke="#333" stroke-width="0.5"/>
<line x1="794.6" y1="310.1" x2="795.5" y2="310.1" stroke="#333" stroke-width="0.5"/>
<line x1="794.6" y1="304.8" x2="796.2" y2="304.8" stroke="#333" stroke-width="0.5"/>
<line x1="794.6" y1="299.6" x2="795.5" y2="299.6" stroke="#333" stroke-width="0.5"/>
<line x1="794.6" y1="294.4" x2="795.5" y2="294.4" stroke="#333" stroke-width="0.5"/>
<text x="709.8" y="353.2" class="pt" text-anchor="middle">-2</text>
<text x="752.2" y="353.2" class="pt" text-anchor="middle">-1</text>
<text x="837.0" y="353.2" class="pt" text-anchor="middle">1</text>
<text x="879.4" y="353.2" class="pt" text-anchor="middle">2</text>
<text x="793.1" y="306.2" class="pt" text-anchor="end">0.4</text>
<text x="793.1" y="327.1" class="pt" text-anchor="end">0.2</text>
<text x="793.1" y="368.9" class="pt" text-anchor="end">-0.2</text>
<text x="793.1" y="389.8" class="pt" text-anchor="end">-0.4</text>
<text x="886.5" y="347.9" class="pt" font-style="italic">x</text>
<text x="794.0" y="283.5" class="pt" text-anchor="middle">−x + ⌊x⌋ + ½</text>
</svg>
</div>
</div>
</body></html>
